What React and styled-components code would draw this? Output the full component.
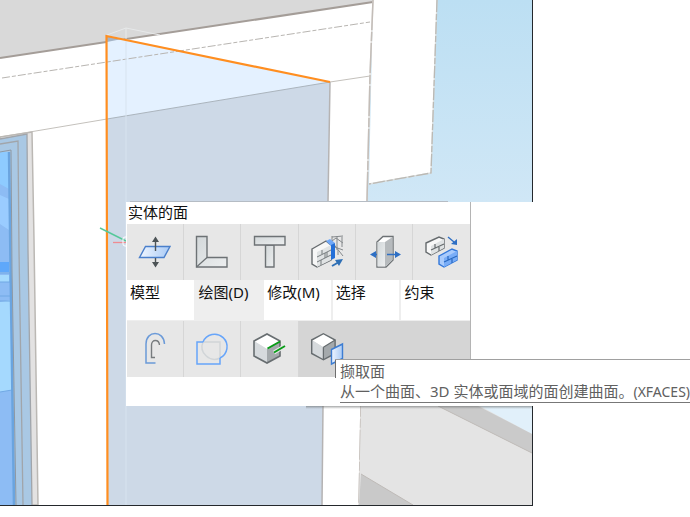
import React from 'react';
import styled, { createGlobalStyle } from 'styled-components';

const GlobalStyle = createGlobalStyle`
    * {
        box-sizing: border-box;
    }
    body {
        margin: 0;
        background-color: #ffffff;
        font-family: "Noto Sans", "Noto Sans CJK SC", sans-serif;
        font-size: 15px;
        overflow-x: hidden;
    }
`;

const Page = styled.main`
    position: relative;
    overflow: hidden;
`;

const Viewport = styled.section`
    margin-right: 157px;
    border-right: 1px solid #24282c;
    border-bottom: 1px solid #24282c;
`;

const SceneSvg = styled.svg`
    display: block;
    width: 100%;
    height: auto;
`;

/* floats over the model, next to the cursor */
const QuadLayer = styled.div`
    position: absolute;
    top: 202px;
    left: 126px;
    right: 0;
    padding-bottom: 29px;
    background-color: #ffffff;
`;

const Quad = styled.section`
    width: 345px;
    border-right: 1px solid #b4b4b4;
`;

const QuadTitle = styled.h1`
    margin: 0;
    padding: 0 0 2px 2px;
    font-size: 15px;
    font-weight: 400;
    line-height: 20px;
    color: #111111;
`;

const ToolRow = styled.div`
    display: grid;
    grid-template-columns: repeat(6, 1fr);
    margin-left: 1px;
    background-color: ${props => props.$filled ? '#d5d5d5' : '#e7e7e7'};
`;

const ToolButton = styled.button`
    display: flex;
    align-items: center;
    justify-content: center;
    height: 56px;
    padding: 0 0 2px;
    border: none;
    border-right: 1px solid ${props => props.$active ? 'transparent' : '#d6d6d6'};
    background-color: ${props => props.$active ? '#d5d5d5' : '#e7e7e7'};

    &:last-child {
        border-right: none;
    }
`;

const TabRow = styled.nav`
    display: grid;
    grid-template-columns: repeat(5, 1fr);
    height: 41px;
    margin-left: 1px;
    border-bottom: 1px solid #eeeeee;
`;

const TabButton = styled.button`
    display: flex;
    align-items: flex-start;
    padding: 0 0 0 3px;
    border: none;
    border-right: 2px solid #eeeeee;
    background-color: ${props => props.$active ? '#eeeeee' : '#ffffff'};
    font-family: inherit;
    font-size: 15px;
    line-height: 24px;
    color: #111111;
    white-space: nowrap;

    &:last-child {
        border-right: none;
    }
`;

const Tooltip = styled.div`
    position: absolute;
    top: 157px;
    left: 209px;
    right: 0;
    border-top: 1px solid #a0a0a0;
    background-color: #ffffff;
    color: #606060;
    white-space: nowrap;
`;

const TooltipTitle = styled.p`
    margin: 0;
    padding: 2px 0 0 4px;
    height: 18px;
    border-left: 1px solid #6e6e6e;
    line-height: 18px;
`;

const TooltipText = styled.p`
    margin: 0 0 0 5px;
    height: 25px;
    border-bottom: 1px solid #777777;
    line-height: 26px;
`;

const CommandName = styled.span`
    font-size: 14px;
`;

const IconSvg = styled.svg`
    display: block;
    width: 36px;
    height: 36px;
    flex: none;
`;

const Icon = ({ children }) => (
    <IconSvg viewBox="0 0 36 36" fill="none" aria-hidden="true">
        {children}
    </IconSvg>
);

const PushPullIcon = () => (
    <Icon>
        <path d="M8.5 13.5H33L27 24.5H2.5Z" fill="url(#blueFace)" stroke="#4a7fcb" strokeWidth="1.4" />
        <path d="M18.5 18V8M18.5 25V30" stroke="#4c5356" strokeWidth="1.4" />
        <path d="M15 9L18.5 3.5L22 9ZM15 29H22L18.5 34.5Z" fill="#4c5356" />
    </Icon>
);

const LConnectIcon = () => (
    <Icon>
        <path d="M2.5 3.5H13V24.5H33V34H2.5Z" fill="url(#greyFace)" stroke="#6d7275" strokeWidth="1.4" />
        <path d="M13 24.5L2.5 34" stroke="#6d7275" strokeWidth="1.2" />
    </Icon>
);

const TConnectIcon = () => (
    <Icon>
        <path d="M14.5 12H23V34H14.5Z" fill="url(#greyFace)" stroke="#6d7275" strokeWidth="1.4" />
        <path d="M3.5 3.5H34V12H3.5Z" fill="url(#greyFace)" stroke="#6d7275" strokeWidth="1.4" />
    </Icon>
);

const WallExtendIcon = () => (
    <Icon>
        <path d="M23 3V9L34 23M23 8L27 5L34 10M28 3V17M33 4V14M23 13L34 17M29 17V22M23 4L34 3" stroke="#85898c" strokeWidth="1" />
        <path d="M3 16L17 8L22 12V27L8 34L3 31Z" fill="#f7f7f7" stroke="#666b6e" strokeWidth="1.4" />
        <path d="M8 19L22 12V27L8 34Z" fill="#e0e3e4" />
        <path d="M8 24L22 17M8 29L22 22M13 17V21M18 19V24M12 27V32M16 25V20" stroke="#777c7f" strokeWidth="1" />
        <path d="M17 8L21 6L26 10L22 13Z" fill="#70a8f8" />
        <path d="M22 12L26 10V25L22 27Z" fill="#246fd8" />
        <path d="M23 33L30 29" stroke="#2e6fb5" strokeWidth="2" />
        <path d="M26 27L34 26L30 33Z" fill="#2e6fb5" />
    </Icon>
);

const ThicknessIcon = () => (
    <Icon>
        <path d="M11 9L17 3.5H27V27L20 34H11Z" fill="#ffffff" stroke="#6d7275" strokeWidth="1.4" />
        <path d="M11.5 9H19V33.5H11.5Z" fill="url(#greyFace)" />
        <path d="M19 9L26.5 4V27L19 33.5Z" fill="#b6babd" />
        <path d="M11 21.5H8M21 21.5H30" stroke="#2e6fc4" strokeWidth="1.4" />
        <path d="M10 18V25L4 21.5ZM29 18V25L35 21.5Z" fill="#2e6fc4" />
    </Icon>
);

const CopyWallIcon = () => (
    <Icon>
        <path d="M3 10L16 4L21 6V15L8 22L3 19Z" fill="#f8f8f8" stroke="#666b6e" strokeWidth="1.4" />
        <path d="M8 13L21 6V15L8 22Z" fill="#dfe2e3" />
        <path d="M8 17L21 11M12 11V15M16 14V18" stroke="#666b6e" strokeWidth="1.2" />
        <path d="M16 23L29 16L34 18V27L21 34L16 31Z" fill="#a9cbfc" stroke="#3378da" strokeWidth="1.4" />
        <path d="M21 25L34 18V27L21 34Z" fill="#79adf7" />
        <path d="M21 29L34 23M25 23V27M29 26V30" stroke="#2868c0" strokeWidth="1.2" />
        <path d="M25 4L31 9" stroke="#2e6fc4" strokeWidth="1.4" />
        <path d="M28 11L34 6V12Z" fill="#2e6fc4" />
    </Icon>
);

const OffsetIcon = () => (
    <Icon>
        <path d="M18.5 33H9V14C9 0 27 0 27.5 14" stroke="#6b9ad8" strokeWidth="1.5" />
        <path d="M18 27.5H14.5V15C14.5 9 22 9 22.5 15" stroke="#777b7e" strokeWidth="1.4" />
    </Icon>
);

const RegionIcon = () => (
    <Icon>
        <path d="M9 12H26V28A12.5 12.5 0 0 1 9 12Z" stroke="#d1d5d8" strokeWidth="1.4" />
        <path d="M9 12H3V34H26V28M9 12A12.5 12.5 0 1 1 26 28" stroke="#67a5fa" strokeWidth="1.5" />
    </Icon>
);

const CubeFaces = () => (
    <>
        <path d="M3 10L16 3L29 10L16 18Z" fill="#ffffff" />
        <path d="M3 10L16 18V32L3 25Z" fill="#d6dadd" />
        <path d="M16 18L29 10V25L16 32Z" fill="#a4a9ac" />
        <path d="M3 10L16 3L29 10V25L16 32L3 25Z" stroke="#676d70" strokeWidth="1.6" />
    </>
);

const ExtractEdgeIcon = () => (
    <Icon>
        <g transform="translate(0 1)">
            <CubeFaces />
            <path d="M16.5 17.5L29 10.5" stroke="#079c16" strokeWidth="2" />
            <path d="M23 21.5L34 15" stroke="#e7e7e7" strokeWidth="4" />
            <path d="M23 21.5L34 15" stroke="#079c16" strokeWidth="2" />
        </g>
    </Icon>
);

const ExtractFaceIcon = () => (
    <Icon>
        <g transform="translate(0 1) scale(0.9)">
            <CubeFaces />
            <path d="M16 18V32M16 18L29 10" stroke="#676d70" strokeWidth="1.4" />
        </g>
        <path d="M22.5 19.5L33.5 14V28.5L22.5 34Z" fill="url(#blueFace)" stroke="#3d7dd2" strokeWidth="1.4" />
    </Icon>
);

const modelTools = [
    { name: '推拉', icon: PushPullIcon },
    { name: 'L 形连接', icon: LConnectIcon },
    { name: 'T 形连接', icon: TConnectIcon },
    { name: '延伸墙', icon: WallExtendIcon },
    { name: '厚度', icon: ThicknessIcon },
    { name: '复制墙', icon: CopyWallIcon },
];

const drawTools = [
    { name: '偏移', icon: OffsetIcon },
    { name: '面域', icon: RegionIcon },
    { name: '撷取边', icon: ExtractEdgeIcon },
    { name: '撷取面', icon: ExtractFaceIcon, active: true },
];

const tabs = ['模型', '绘图(D)', '修改(M)', '选择', '约束'];

const Scene = () => (
    <SceneSvg viewBox="0 0 532 505" fill="none" role="img" aria-label="3D">
        <defs>
            <linearGradient id="sky" x1="0" y1="0" x2="0" y2="1">
                <stop offset="0" stopColor="#bcdff3" />
                <stop offset="0.4" stopColor="#d0e7f6" />
                <stop offset="0.8" stopColor="#e1f0fa" />
            </linearGradient>
            <linearGradient id="blueFace" x1="0" y1="0" x2="1" y2="0">
                <stop offset="0" stopColor="#f0f6ff" />
                <stop offset="1" stopColor="#a9caf5" />
            </linearGradient>
            <linearGradient id="greyFace" x1="0" y1="0" x2="1" y2="1">
                <stop offset="0" stopColor="#d3d8da" />
                <stop offset="1" stopColor="#eceeef" />
            </linearGradient>
            <linearGradient id="tipShadow" x1="0" y1="0" x2="0" y2="1">
                <stop offset="0" stopColor="#555b5c" stopOpacity="0.75" />
                <stop offset="1" stopColor="#777777" stopOpacity="0" />
            </linearGradient>
        </defs>
        <rect width="532" height="505" fill="url(#sky)" />
        <path d="M0 0H373L367 201L361 406L359 505H0Z" fill="#ffffff" />
        <path d="M373 0H437L431 173L369 184Z" fill="#ffffff" />

        {/* roof and wall edges */}
        <path d="M0 0H373V2L0 58Z" fill="#d9d9d9" />
        <path d="M0 58L373 2" stroke="#a49d98" strokeWidth="2" />
        <path d="M0 137L107 119M330 82L370 76" stroke="#c4c1bc" />

        {/* selected face */}
        <path d="M106 35L330 82L107 119Z" fill="#e4f1ff" />
        <path d="M107 119L330 82L328 202L323 406L322 505H107Z" fill="#cdd9e7" />
        <path d="M107 42L122 39L107 36Z" fill="#a5b4c6" />
        <path d="M107 119L330 82" stroke="#aab4bd" />
        <path d="M2 78L370 22" stroke="#b8b5b1" strokeDasharray="8 2 4 2" />
        <path d="M330 82L328 202L323 406L322 505" stroke="#b5b3b3" strokeWidth="1.5" />
        <path d="M373 0L370 76L367 201L361 406L359 505" stroke="#e2dfdc" strokeWidth="1.5" />
        <path d="M373 0L370 76L367 201L361 406L359 505" stroke="#c3bdb8" strokeDasharray="30 2 9 2" strokeWidth="1.5" />
        <path d="M437 0L431 173L369 184" stroke="#dcdedd" strokeWidth="1.3" />
        <path d="M437 0L431 173L369 184" stroke="#bbb9b4" strokeDasharray="12 2 6 2" strokeWidth="1.3" />
        <path d="M107 35L126 28L160 35M126 28V40" stroke="#e7e9ea" />
        <path d="M126 40V505" stroke="#d7e3ef" />
        <path d="M107.5 505L106.5 36L330 82" stroke="#ff8e20" strokeWidth="2.2" />
        <path d="M100 228L126 241" stroke="#55c99a" strokeWidth="1.5" />
        <path d="M113 242.5H126" stroke="#ef8b91" strokeWidth="1.3" />
        <rect x="123" y="237" width="8" height="9" rx="2" stroke="#ffffff" />

        {/* window */}
        <path d="M0 137L32 132L34 240L38 505H0Z" fill="#e3e2e2" stroke="#bbb8b4" strokeWidth="1.5" />
        <path d="M0 139L27 134L28 250L32 505H0Z" fill="#a9c8e4" />
        <path d="M0 139L27 134L28 250L32 505M0 144L18 141L19 250L23 505" stroke="#a1a5aa" strokeWidth="1.3" />
        <path d="M0 152H10L11 300L15 505H0Z" fill="#8dbcf4" />
        <path d="M0 152H9V189L0 184Z" fill="#8ecbff" />
        <path d="M0 195L9 199V230L0 224Z" fill="#9accff" />
        <path d="M0 262H9V272H0Z" fill="#5fa8fa" />
        <path d="M0 275H9V282H0Z" fill="#a5dafe" />
        <path d="M0 302L11 300L12 390L0 392Z" fill="#a5d9fe" />
        <path d="M0 273H10M0 282H10M0 296H10M0 301H10M0 392L12 390" stroke="#71a8e4" />
        <path d="M9 152L11 300L14 505" stroke="#6aa4df" strokeWidth="2.5" />
        <path d="M0 152L11 150L12 270L16 505" stroke="#8e98a3" />

        {/* lower wall */}
        <path d="M361 406H480L532 434V505H359Z" fill="#e4e4e4" />
        <path d="M438 406H478L532 434V453Z" fill="#cacaca" />
        <path d="M361 474L413 505H359Z" fill="#c9c9c9" />
        <path d="M438 406L532 453M361 474L413 505" stroke="#bebab7" />

        {/* popup shadows */}
        <path d="M130 201.5H448" stroke="#b5bcc4" />
        <rect x="306" y="405" width="226" height="4" fill="url(#tipShadow)" />
    </SceneSvg>
);

const Tools = ({ items }) => items.map(({ name, icon: ToolIcon, active }) => (
    <ToolButton key={name} type="button" aria-label={name} $active={active}>
        <ToolIcon />
    </ToolButton>
));

const App = () => (
    <>
        <GlobalStyle />
        <Page>
            <Viewport>
                <Scene />
            </Viewport>
            <QuadLayer>
                <Quad>
                    <QuadTitle>实体的面</QuadTitle>
                    <ToolRow>
                        <Tools items={modelTools} />
                    </ToolRow>
                    <TabRow>
                        {tabs.map((tab, index) => (
                            <TabButton key={tab} type="button" $active={index === 1}>{tab}</TabButton>
                        ))}
                    </TabRow>
                    <ToolRow $filled>
                        <Tools items={drawTools} />
                    </ToolRow>
                </Quad>
                <Tooltip role="tooltip">
                    <TooltipTitle>撷取面</TooltipTitle>
                    <TooltipText>
                        从一个曲面、3D 实体或面域的面创建曲面。<CommandName>(XFACES)</CommandName>
                    </TooltipText>
                </Tooltip>
            </QuadLayer>
        </Page>
    </>
);

export default App;
